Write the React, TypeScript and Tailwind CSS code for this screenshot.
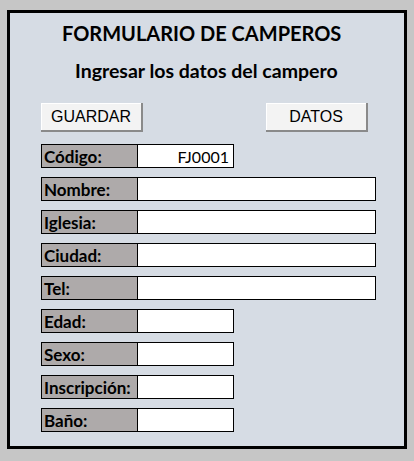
const rows: { label: string; value?: string; wide: boolean }[] = [
  { label: "Código:", value: "FJ0001", wide: false },
  { label: "Nombre:", wide: true },
  { label: "Iglesia:", wide: true },
  { label: "Ciudad:", wide: true },
  { label: "Tel:", wide: true },
  { label: "Edad:", wide: false },
  { label: "Sexo:", wide: false },
  { label: "Inscripción:", wide: false },
  { label: "Baño:", wide: false },
];

function FieldRow({ label, value, wide }: { label: string; value?: string; wide: boolean }) {
  return (
    <div className="flex h-[24px]">
      <div className="flex w-[97px] items-center overflow-hidden border border-black bg-[#aeaaaa] pt-[2px] pl-[2px] text-[17px] font-bold whitespace-nowrap text-black">
        {label}
      </div>
      <div
        className={`flex items-center justify-end border border-l-0 border-black bg-white pt-[1px] pr-[4px] text-[16px] text-black ${
          wide ? "w-[238px]" : "w-[96px]"
        }`}
      >
        {value}
      </div>
    </div>
  );
}

function SheetButton({ children }: { children: string }) {
  return (
    <button className="flex h-[29px] w-[102px] items-center justify-center border-r-2 border-b-2 border-r-[#8a8a8a] border-b-[#8a8a8a] bg-[#f3f3f3] font-['Liberation_Sans',sans-serif] text-[16px] text-black shadow-[inset_1px_1px_0_#ffffff]">
      {children}
    </button>
  );
}

export default function App() {
  return (
    <div className="h-[461px] w-[414px] bg-[#c6c6c6] pt-[10px] pl-[7px] font-['Lato',sans-serif]">
      <div className="flex h-[439px] w-[400px] flex-col border-[3px] border-black bg-[#d6dce4]">
        <h1 className="mt-[5px] pl-[52px] text-[20px] leading-[30px] font-bold text-black">
          FORMULARIO DE CAMPEROS
        </h1>
        <h2 className="mt-[10px] pl-[65px] text-[19.5px] leading-[26px] font-bold text-black">
          Ingresar los datos del campero
        </h2>
        <div className="mt-[19px] flex justify-between pr-[36px] pl-[31px]">
          <SheetButton>GUARDAR</SheetButton>
          <SheetButton>DATOS</SheetButton>
        </div>
        <div className="mt-[12px] flex flex-col gap-[9px] pl-[31px]">
          {rows.map((r) => (
            <FieldRow key={r.label} {...r} />
          ))}
        </div>
      </div>
    </div>
  );
}
